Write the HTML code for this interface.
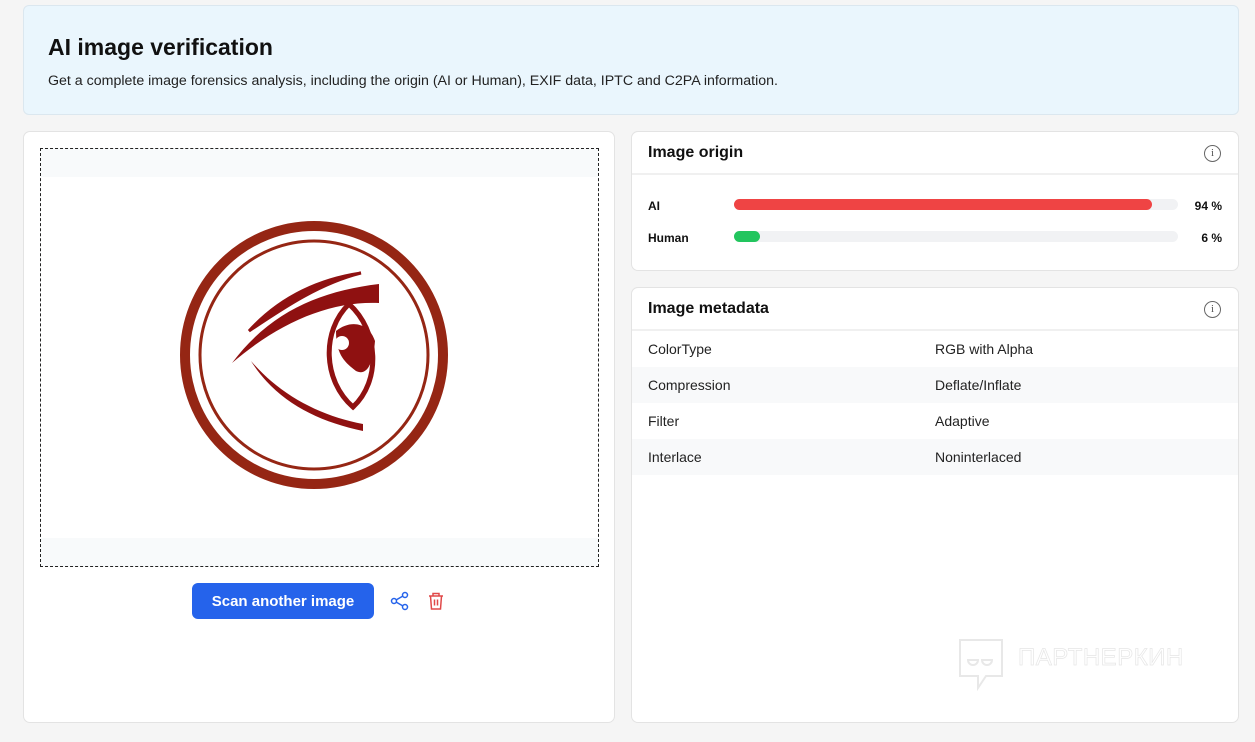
<!DOCTYPE html>
<html><head><meta charset="utf-8"><style>
*{box-sizing:border-box;margin:0;padding:0}
body{width:1255px;height:742px;background:#f5f5f5;font-family:"Liberation Sans",sans-serif;color:#111;position:relative;overflow:hidden}
.hdr{position:absolute;left:23px;top:5px;width:1216px;height:110px;background:#eaf6fd;border:1px solid #dbe7ef;border-radius:6px}
.hdr h1{position:absolute;left:24px;top:28px;font-size:23px;font-weight:700}
.hdr p{position:absolute;left:24px;top:67px;font-size:14.2px;color:#222}
.card{position:absolute;background:#fff;border:1px solid #e3e3e3;border-radius:7px}
.ct{position:absolute;left:16px;top:12px;font-size:16px;font-weight:700}
.info{position:absolute;right:17px;top:13px;width:17px;height:17px;border:1.5px solid #666;border-radius:50%;font-size:11px;text-align:center;line-height:14px;color:#555;font-family:"Liberation Serif",serif}
.sep{position:absolute;left:0;right:0;top:41px;height:2px;background:#f0f0f0}
.lbl{position:absolute;left:16px;font-size:12px;font-weight:700}
.bar{position:absolute;left:102px;width:444px;height:11px;background:#f1f2f4;border-radius:6px}
.bar i{display:block;height:11px;border-radius:6px}
.pct{position:absolute;right:16px;font-size:12px;font-weight:700}
.row{position:absolute;left:0;right:0;height:36px;font-size:14px;color:#222}
.row span{position:absolute;top:10px}
</style></head><body>
<div class="hdr"><h1>AI image verification</h1><p>Get a complete image forensics analysis, including the origin (AI or Human), EXIF data, IPTC and C2PA information.</p></div>

<div class="card" style="left:23px;top:131px;width:592px;height:592px">
 <div style="position:absolute;left:16px;top:16px;width:559px;height:419px;border:1px dashed #222;background:#f8fafb">
  <div style="position:absolute;left:0;right:0;top:28px;height:361px;background:#fff"></div>
  <svg style="position:absolute;left:0;top:0" width="559" height="419" viewBox="0 0 559 419">
   <g transform="translate(-40,-148)">
   <circle cx="313" cy="354" r="129" fill="none" stroke="#952614" stroke-width="10"/>
   <circle cx="313" cy="354" r="114" fill="none" stroke="#952614" stroke-width="3"/>
   <path d="M231 362 C270 310 320 290 378 283 L378 302 C330 300 280 320 231 362Z" fill="#8f1111"/>
   <path d="M248 330 C280 295 320 278 360 272 C320 282 285 305 248 330Z" fill="#8f1111" stroke="#8f1111" stroke-width="3"/>
   <path d="M250 360 C280 395 320 415 362 423 L362 430 C315 420 275 400 250 360Z" fill="#8f1111"/>
   <path d="M348 303 C378 330 380 380 352 406 C322 380 320 330 348 303Z" fill="none" stroke="#8f1111" stroke-width="5"/>
   <path d="M335 330 C350 318 368 322 374 340 C372 365 365 375 355 370 C345 362 335 355 335 330Z" fill="#8f1111"/>
   <circle cx="341" cy="342" r="7" fill="#fff"/>
   </g>
  </svg>
 </div>
 <div style="position:absolute;left:168px;top:451px;width:182px;height:36px;background:#2563eb;border-radius:6px;color:#fff;font-size:15px;font-weight:700;text-align:center;line-height:38px">Scan another image</div>
 <svg style="position:absolute;left:366px;top:459px" width="20" height="20" viewBox="0 0 20 20" fill="none" stroke="#2563eb" stroke-width="1.5"><circle cx="15" cy="4" r="2.5"/><circle cx="4" cy="10" r="2.5"/><circle cx="15" cy="16" r="2.5"/><path d="M6 9l7-4M6 11l7 4"/></svg>
 <svg style="position:absolute;left:403px;top:459px" width="18" height="20" viewBox="0 0 18 20" fill="none" stroke="#e04848" stroke-width="1.5"><path d="M2 5h14M6 5V2.5h6V5M3.5 5l1 13h9l1-13M7.5 8.5v6M10.5 8.5v6"/></svg>
</div>

<div class="card" style="left:631px;top:131px;width:608px;height:140px">
 <div class="ct">Image origin</div><div class="info">i</div><div class="sep"></div>
 <div class="lbl" style="top:67px">AI</div><div class="bar" style="top:67px"><i style="width:418px;background:#ef4444"></i></div><div class="pct" style="top:67px">94 %</div>
 <div class="lbl" style="top:99px">Human</div><div class="bar" style="top:99px"><i style="width:26px;background:#22c55e"></i></div><div class="pct" style="top:99px">6 %</div>
</div>

<div class="card" style="left:631px;top:287px;width:608px;height:436px">
 <div class="ct">Image metadata</div><div class="info">i</div><div class="sep"></div>
 <div class="row" style="top:43px"><span style="left:16px">ColorType</span><span style="left:303px">RGB with Alpha</span></div>
 <div class="row" style="top:79px;background:#f8f9fa"><span style="left:16px">Compression</span><span style="left:303px">Deflate/Inflate</span></div>
 <div class="row" style="top:115px"><span style="left:16px">Filter</span><span style="left:303px">Adaptive</span></div>
 <div class="row" style="top:151px;background:#f8f9fa"><span style="left:16px">Interlace</span><span style="left:303px">Noninterlaced</span></div>
 <svg style="position:absolute;left:324px;top:350px" width="50" height="56" viewBox="0 0 50 56" fill="none" stroke="#e8e8e8" stroke-width="2"><path d="M4 2h42v36H30l-8 12V38H4z"/><path d="M12 22h10a3 3 0 0 1-10 0zM26 22h10a3 3 0 0 1-10 0z"/></svg>
 <div style="position:absolute;left:386px;top:356px;font-size:24px;color:#fff;-webkit-text-stroke:0.7px #e6e6e6;letter-spacing:0.5px">ПАРТНЕРКИН</div>
</div>
</body></html>
